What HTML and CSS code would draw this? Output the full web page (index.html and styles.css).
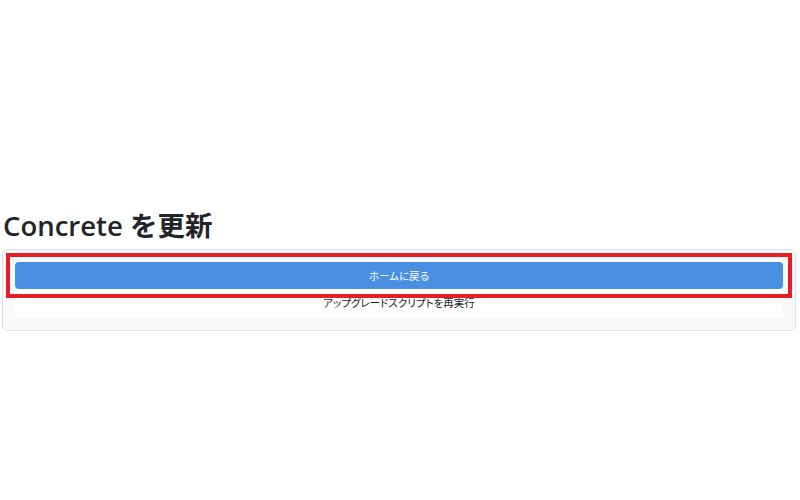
FILE: index.html
```html
<!DOCTYPE html>
<html lang="ja">
<head>
<meta charset="utf-8">
<title>Concrete を更新</title>
<link rel="stylesheet" href="styles.css">
</head>
<body>
<main class="page">
  <h1 class="title">Concrete を更新</h1>
  <section class="card">
    <div class="panel">
      <div class="highlight">
        <a class="btn-primary" href="#">ホームに戻る</a>
      </div>
      <a class="btn-link" href="#">アップグレードスクリプトを再実行</a>
    </div>
  </section>
</main>
</body>
</html>
```

FILE: styles.css
```css
html, body {
  margin: 0;
  padding: 0;
  background: #ffffff;
}
body {
  font-family: "Open Sans", "Noto Sans CJK JP", sans-serif;
  color: #212529;
}
.page {
  padding: 209px 2px 0 2px;
}
.title {
  margin: 0 0 6px 1px;
  font-size: 27.5px;
  font-weight: 600;
  line-height: 1.25;
  color: #212529;
}
.card {
  border: 1px solid #dfe2e5;
  border-radius: 5px;
  background: #f8f9fa;
  padding: 12px 12px 12px 12px;
  width: 794px;
  box-sizing: border-box;
}
.panel {
  background: #ffffff;
  display: flex;
  flex-direction: column;
}
.highlight {
  outline: 4px solid #ea1c24;
  outline-offset: 5px;
}
.btn-primary {
  display: flex;
  align-items: center;
  justify-content: center;
  height: 27px;
  background: #4a90e2;
  border-radius: 4px;
  color: #ffffff;
  text-decoration: none;
  font-family: "Noto Sans CJK JP", sans-serif;
  font-size: 10.5px;
  font-feature-settings: "palt";
}
.btn-link {
  display: block;
  text-align: center;
  color: #212529;
  text-decoration: none;
  font-family: "Noto Sans CJK JP", sans-serif;
  font-size: 10.5px;
  font-feature-settings: "palt";
  line-height: 16px;
  padding: 6px 0 7px;
}
```
